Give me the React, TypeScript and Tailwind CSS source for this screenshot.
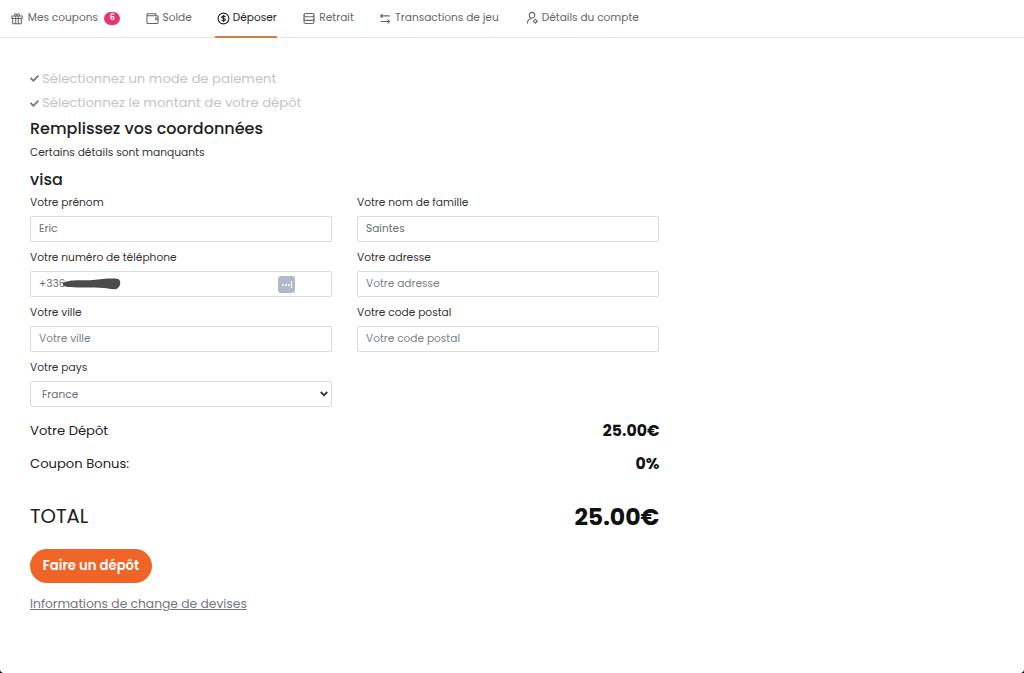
import type { ReactNode } from "react";
import { FaCheck } from "react-icons/fa";

const GiftIcon = () => (
  <svg viewBox="0 0 14 14" className="h-[13px] w-[12px] shrink-0" fill="none" stroke="currentColor" strokeWidth="1.2">
    <path d="M1 4h12v3H1zM2 7v6h10V7M5.500 4v9M8.500 4v9M4.200 3.500V2.200C4.200 1 6.500 1.200 7 3.500c.5-2.300 2.800-2.500 2.800-1.300v1.300" />
  </svg>
);

const WalletIcon = () => (
  <svg viewBox="0 0 14 14" className="h-[13px] w-[13px] shrink-0" fill="none" stroke="currentColor" strokeWidth="1.1">
    <path d="M1 3v8.500a1 1 0 0 0 1 1h10a1 1 0 0 0 1-1V5a1 1 0 0 0-1-1H2a1 1 0 0 1-1-1 1 1 0 0 1 1-1h8.500v2" />
    <path d="M13 6.300h-2.500v2H13" />
  </svg>
);

const DollarIcon = () => (
  <svg viewBox="0 0 14 14" className="h-[13px] w-[13px] shrink-0" fill="none" stroke="currentColor" strokeWidth="1.2">
    <circle cx="7" cy="7" r="5.800" />
    <path d="M9 5.500C8.700 4.800 8 4.500 7 4.500c-2.600 0-2.600 2.300 0 2.500 2.700.2 2.600 2.500 0 2.500-1.100 0-1.800-.3-2.100-1M7 3.300v7.400" />
  </svg>
);

const CoinsIcon = () => (
  <svg viewBox="0 0 14 14" className="h-[13px] w-[12px] shrink-0" fill="none" stroke="currentColor" strokeWidth="1.3">
    <rect x="1.200" y="1.200" width="11.600" height="3.800" rx="1.900" />
    <path d="M1.200 3.200v4.300c0 1 .8 1.700 1.900 1.700h7.800c1.100 0 1.900-.7 1.900-1.700V3.200" />
    <path d="M1.200 7.200v3.900c0 1 .8 1.700 1.900 1.700h7.800c1.100 0 1.900-.7 1.900-1.700V7.200" />
  </svg>
);

const TransferIcon = () => (
  <svg viewBox="0 0 14 14" className="h-[13px] w-[12px] shrink-0" fill="none" stroke="currentColor" strokeWidth="1.3">
    <path d="M12.500 4H2M4 1.800 1.800 4 4 6.200M2 10.500h10.500M10 8.300l2.200 2.200-2.200 2.200" />
  </svg>
);

const UserIcon = () => (
  <svg viewBox="0 0 14 14" className="h-[14px] w-[13px] shrink-0" fill="none" stroke="currentColor" strokeWidth="1.2">
    <circle cx="6.500" cy="4" r="3" />
    <path d="M1.500 13c0-3 1.500-5 4.500-5.500" />
    <circle cx="10" cy="10.500" r="1.600" />
    <path d="M10 7.800V9M10 12v1.200M7.300 10.500h1.200M11.500 10.500h1.200" />
  </svg>
);

type Tab = { label: string; icon: ReactNode; className: string; badge?: number };

const tabs: Tab[] = [
  { label: "Mes coupons", icon: <GiftIcon />, className: "w-[109px] gap-[4.500px]", badge: 6 },
  { label: "Solde", icon: <WalletIcon />, className: "w-[46px] gap-[3.500px]" },
  { label: "Déposer", icon: <DollarIcon />, className: "w-[60px] gap-[3px]" },
  { label: "Retrait", icon: <CoinsIcon />, className: "w-[50px] gap-[4px]" },
  { label: "Transactions de jeu", icon: <TransferIcon />, className: "w-[121px] gap-[4px]" },
  { label: "Détails du compte", icon: <UserIcon />, className: "w-[113px] gap-[3px]" },
];

const Field = ({ label, children }: { label: string; children: ReactNode }) => (
  <label className="block h-[55.200px]">
    <span className="block h-[22px] pt-px text-[10.650px] leading-[16px] text-[#333]">{label}</span>
    {children}
  </label>
);

const inputClass =
  "block h-[26px] w-full rounded-[2px] border border-[#d9dcdf] bg-white px-2 text-[10.600px] text-[#6b6f73] outline-none placeholder:text-[#7b7f83]";

export default function App() {
  return (
    <div className="h-[673px] bg-black">
      <div className="h-full overflow-hidden rounded-b-[4px] bg-white font-[Poppins,Inter,sans-serif] text-[#222]">
        <nav className="flex h-[38px] gap-[25.700px] border-b border-[#e5e5e5] pl-[11.300px] text-[10.600px] text-[#666]">
          {tabs.map((tab) => {
            const active = tab.label === "Déposer";
            return (
              <a
                key={tab.label}
                className={`relative flex h-[36px] items-center whitespace-nowrap ${tab.className} ${active ? "-left-[1px] text-[#222]" : ""}`}
              >
                {tab.icon}
                <span>{tab.label}</span>
                {tab.badge && (
                  <span className="ml-auto flex h-[13px] w-[16px] items-center justify-center rounded-full bg-[#e73371] text-[8px] font-semibold text-white">
                    {tab.badge}
                  </span>
                )}
                {active && <span className="absolute top-[36px] -left-[2px] h-[2px] w-[62px] bg-[#de7748]" />}
              </a>
            );
          })}
        </nav>

        <main className="ml-[30px] w-[629.400px] pt-[28.600px]">
          <div className="text-[13.200px] leading-[24.500px] text-[#c4c4c4]">
            <p className="flex items-center gap-[3px]">
              <FaCheck className="h-[9px] w-[9px] text-[#777]" />
              <span>Sélectionnez un mode de paiement</span>
            </p>
            <p className="flex items-center gap-[3px]">
              <FaCheck className="h-[9px] w-[9px] text-[#777]" />
              <span>Sélectionnez le montant de votre dépôt</span>
            </p>
          </div>
          <h1 className="pt-[0.400px] text-[16px] leading-[26px] font-medium">Remplissez vos coordonnées</h1>
          <p className="pt-px text-[10.650px] leading-[20px] text-[#333]">Certains détails sont manquants</p>
          <h2 className="pt-[4px] text-[16px] leading-[26px] font-medium">visa</h2>

          <form className="mt-[0.900px] grid grid-cols-2 gap-x-[24.600px]">
            <Field label="Votre prénom">
              <input className={inputClass} defaultValue="Eric" />
            </Field>
            <Field label="Votre nom de famille">
              <input className={inputClass} defaultValue="Saintes" />
            </Field>
            <Field label="Votre numéro de téléphone">
              <div className="relative">
                <input className={inputClass} defaultValue="+336" />
                <svg viewBox="0 0 60 14" className="absolute top-[6px] left-[32px] h-[14px] w-[60px]">
                  <path d="M1 6C8 2 20 4 31 3c9-1 19-2 25-1 3 1 3 6 0 9-4 3-9 0-14 0-12-1-24 0-34-1C3 10 0 9 1 6z" fill="#4b4b4b" />
                </svg>
                <span className="absolute top-[5px] left-[248px] flex h-[17px] w-[17px] items-center justify-center gap-[1px] rounded-[3px] bg-[#b3b9c8]">
                  <i className="h-[2px] w-[2px] rounded-full bg-white" />
                  <i className="h-[2px] w-[2px] rounded-full bg-white" />
                  <i className="h-[2px] w-[2px] rounded-full bg-white" />
                  <i className="h-[7px] w-[1px] bg-white" />
                </span>
              </div>
            </Field>
            <Field label="Votre adresse">
              <input className={inputClass} placeholder="Votre adresse" />
            </Field>
            <Field label="Votre ville">
              <input className={inputClass} placeholder="Votre ville" />
            </Field>
            <Field label="Votre code postal">
              <input className={inputClass} placeholder="Votre code postal" />
            </Field>
            <Field label="Votre pays">
              <div className="relative">
                <select className={`${inputClass} appearance-none pt-[2px] pl-[11px]`} defaultValue="France">
                  <option>France</option>
                </select>
                <svg viewBox="0 0 8 6" className="absolute top-[10px] right-[4px] h-[6px] w-[8px]" fill="none" stroke="#333" strokeWidth="1.800">
                  <path d="M.8 1 4 4.300 7.200 1" />
                </svg>
              </div>
            </Field>
          </form>

          <div className="flex h-[33px] items-center justify-between">
            <span className="text-[13.150px]">Votre Dépôt</span>
            <span className="text-[15.700px] font-bold text-[#111]">25.00€</span>
          </div>
          <div className="flex h-[33px] items-center justify-between">
            <span className="text-[13.150px]">Coupon Bonus:</span>
            <span className="text-[15.700px] font-bold text-[#111]">0%</span>
          </div>
          <div className="mt-[19.500px] flex h-[33px] items-center justify-between">
            <span className="text-[19.600px]">TOTAL</span>
            <span className="text-[23.600px] font-bold text-[#111]">25.00€</span>
          </div>

          <button className="mt-[15.700px] block h-[34px] w-[122px] rounded-full bg-[#ee6527] pt-px text-[13.200px] font-semibold whitespace-nowrap text-white">
            Faire un dépôt
          </button>
          <a className="mt-[11.500px] inline-block text-[12.300px] leading-[20px] text-[#73757d] underline">Informations de change de devises</a>
        </main>
      </div>
    </div>
  );
}
